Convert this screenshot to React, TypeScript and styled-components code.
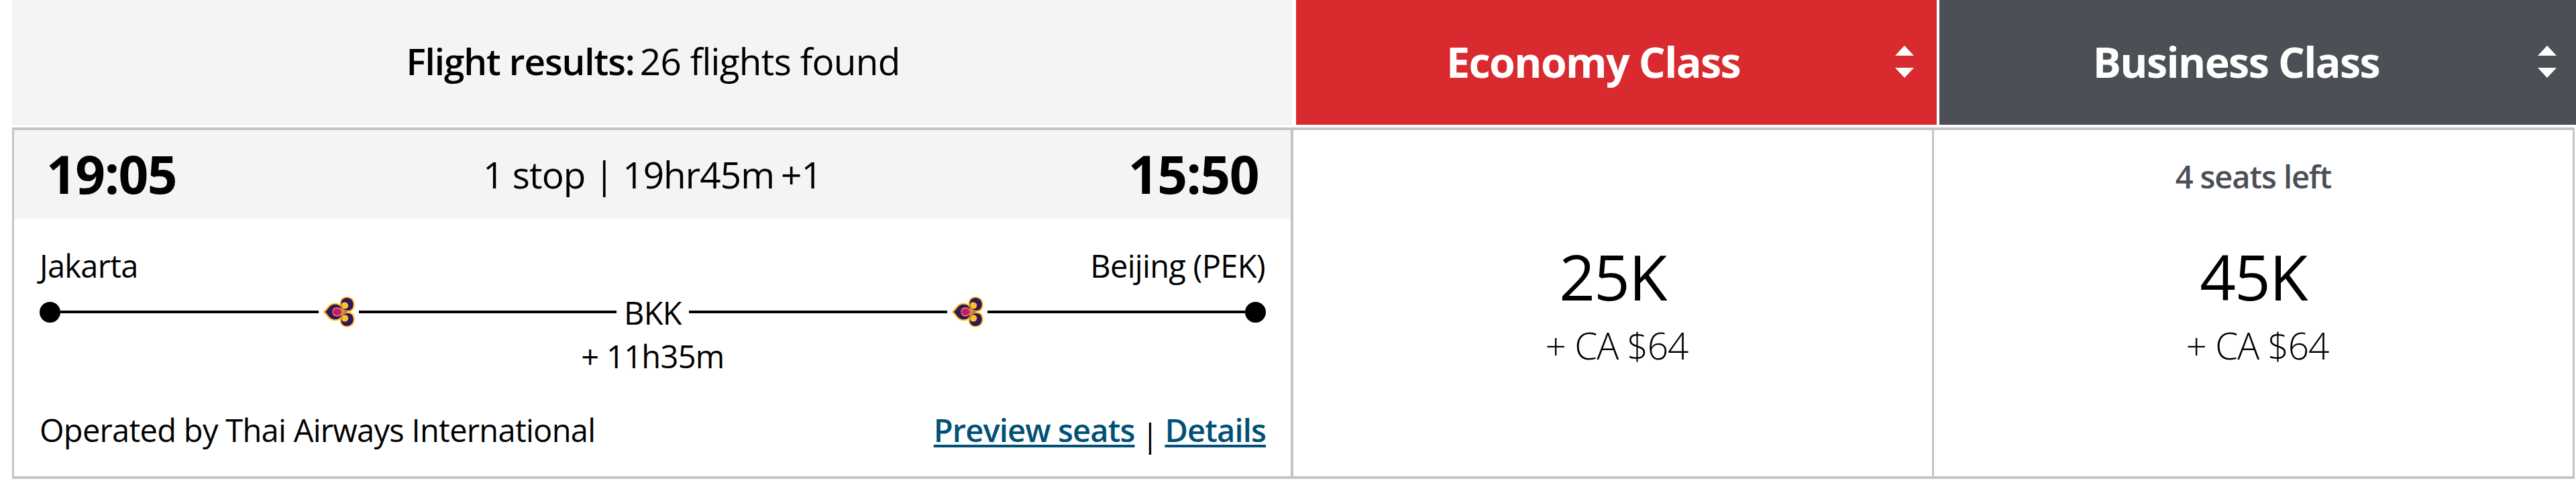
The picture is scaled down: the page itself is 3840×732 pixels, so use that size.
import styled, { createGlobalStyle } from "styled-components";

const colors = {
  economy: "#d92a2f",
  business: "#4b4f56",
  grey: "#f4f4f4",
  border: "#c1c5c9",
  link: "#005078",
  text: "#000000",
};

const GlobalStyle = createGlobalStyle`
  * {
    box-sizing: border-box;
  }

  body {
    margin: 0;
    background: #ffffff;
    color: ${colors.text};
    font-family: "Open Sans", "Noto Sans", sans-serif;
    letter-spacing: -0.7px;
    overflow: hidden;
  }
`;

const Page = styled.main`
  width: 3840px;
  height: 732px;
  padding-left: 18px;
  overflow: hidden;
`;

const HeaderRow = styled.header`
  display: grid;
  grid-template-columns: 1910px 955px 949px;
  column-gap: 4px;
  height: 190px;
  padding-bottom: 4px;
`;

const Summary = styled.div`
  display: flex;
  align-items: center;
  justify-content: center;
  margin-right: 2px;
  padding: 0 0 2px 3px;
  background: ${colors.grey};
  border-bottom: 2px solid #eeeeee;
  font-size: 54.9px;
  line-height: 76px;
`;

const SummaryLabel = styled.strong`
  font-weight: 630;
  letter-spacing: -1.1px;
  margin-right: 8px;
`;

const CabinHeader = styled.div<{ $color: string; $end: number }>`
  display: flex;
  align-items: center;
  gap: 3px;
  padding: 0 ${(props) => props.$end}px 2px 0;
  background: ${(props) => props.$color};
  color: #ffffff;
`;

const CabinTitle = styled.h2`
  flex: 1;
  margin: 0;
  padding-right: 4px;
  font-size: 62.7px;
  font-weight: 660;
  letter-spacing: -1.6px;
  line-height: 86px;
  text-align: center;
`;

const SortIcon = styled.svg`
  width: 28px;
  height: 48px;
  fill: #ffffff;
`;

const Card = styled.section`
  display: grid;
  grid-template-columns: 1907px 955px 955px;
  width: 3820px;
  height: 524px;
  border: solid ${colors.border};
  border-width: 4px 0 4px 3px;
`;

const Flight = styled.article`
  border-right: 4px solid ${colors.border};
`;

const Times = styled.div`
  display: flex;
  align-items: center;
  justify-content: space-between;
  height: 132px;
  padding: 0 48px;
  background: ${colors.grey};
`;

const Time = styled.span`
  padding-bottom: 3px;
  font-size: 78.4px;
  font-weight: 670;
  letter-spacing: -1.5px;
  line-height: 100px;
`;

const Duration = styled.span`
  display: flex;
  gap: 10px;
  font-size: 54.9px;
  letter-spacing: -0.95px;
  line-height: 76px;
`;

const Body = styled.div`
  padding: 38px 37px 0 38px;
  font-size: 47px;
`;

const Cities = styled.div`
  display: flex;
  justify-content: space-between;
  padding-right: 1px;
  line-height: 64px;
`;

const Track = styled.div`
  display: flex;
  align-items: center;
  height: 74px;
`;

const Dot = styled.span`
  width: 31px;
  height: 31px;
  border-radius: 50%;
  background: ${colors.text};
`;

const Line = styled.span`
  flex: 1;
  height: 4px;
  background: ${colors.text};
`;

const Carrier = styled.span`
  display: flex;
  justify-content: center;
  width: 60px;
`;

const Stop = styled.span`
  width: 108px;
  padding-top: 2px;
  line-height: 64px;
  text-align: center;
`;

const Layover = styled.div`
  line-height: 58px;
  text-align: center;
`;

const Footer = styled.footer`
  display: flex;
  justify-content: space-between;
  margin-top: 49px;
  line-height: 64px;
`;

const Links = styled.nav`
  display: flex;
`;

const Link = styled.a`
  color: ${colors.link};
  font-weight: 600;
  letter-spacing: -0.85px;
  text-decoration: underline;
  text-decoration-thickness: 4px;
  text-underline-offset: 4px;
`;

const Divider = styled.span`
  width: 45px;
  padding-top: 8px;
  text-align: center;
`;

const Fare = styled.div`
  display: flex;
  flex-direction: column;
  align-items: center;
  border-right: 3px solid ${colors.border};
`;

const SeatsLeft = styled.span`
  height: 64px;
  margin-top: 37px;
  color: ${colors.business};
  font-size: 47px;
  font-weight: 650;
  letter-spacing: -1.1px;
  line-height: 64px;
`;

const Points = styled.span`
  margin-top: 53px;
  font-size: 94px;
  letter-spacing: -1.8px;
  line-height: 128px;
`;

const Taxes = styled.span`
  padding-left: 12px;
  font-size: 54.9px;
  font-weight: 300;
  letter-spacing: -1px;
  line-height: 78px;
`;

const fares = [
  { points: "25K", taxes: "+ CA $64", seats: "" },
  { points: "45K", taxes: "+ CA $64", seats: "4 seats left" },
];

function SortArrows() {
  return (
    <SortIcon viewBox="0 0 28 48">
      <path d="M14 0 28 15H0zM0 33h28L14 48z" />
    </SortIcon>
  );
}

function ThaiLogo() {
  return (
    <svg width="48" height="46" viewBox="65 35 144 138">
      <g fill="#ffc02e">
        <path d="M66 104C84 92 88 64 121 64C140 64 151 76 158 90V118C151 132 140 144 121 144C88 144 84 116 66 104Z" />
        <path d="M142 66C142 48 155 36 173 36C195 36 208 51 208 71C208 92 197 104 180 104C197 104 208 116 208 137C208 157 195 172 173 172C155 172 142 160 142 142L152 104Z" />
      </g>
      <g fill="#321757">
        <path d="M75 104C90 95 94 70 121 70C137 70 146 79 151 91C156 98 163 100 172 101V107C163 108 156 110 151 117C146 129 137 138 121 138C94 138 90 113 75 104Z" />
        <path d="M147 66C148 50 159 41 173 41C191 41 202 54 202 71C202 88 192 98 177 98C168 98 160 95 155 90C151 84 147 76 147 66Z" />
        <path d="M147 142C148 158 159 167 173 167C191 167 202 154 202 137C202 120 192 110 177 110C168 110 160 113 155 118C151 124 147 132 147 142Z" />
      </g>
      <g fill="#ffc02e">
        <path d="M149 70C153 60 164 58 172 63C181 68 182 80 175 87C169 92 160 91 155 88Z" />
        <path d="M149 138C153 148 164 150 172 145C181 140 182 128 175 121C169 116 160 117 155 120Z" />
      </g>
      <path
        d="M174 104C153 101 148 84 128 84C115 84 108 93 108 104C108 115 115 124 128 124C148 124 153 107 174 104Z"
        fill="#f28a3c"
      />
      <path
        d="M151 104L140 91C128 85 111 91 111 104C111 117 128 123 140 117Z"
        fill="#c0197d"
      />
    </svg>
  );
}

export default function App(): JSX.Element {
  return (
    <Page>
      <GlobalStyle />
      <HeaderRow>
        <Summary>
          <SummaryLabel>Flight results:</SummaryLabel>
          <span>26 flights found</span>
        </Summary>
        <CabinHeader $color={colors.economy} $end={34}>
          <CabinTitle>Economy Class</CabinTitle>
          <SortArrows />
        </CabinHeader>
        <CabinHeader $color={colors.business} $end={29}>
          <CabinTitle>Business Class</CabinTitle>
          <SortArrows />
        </CabinHeader>
      </HeaderRow>
      <Card>
        <Flight>
          <Times>
            <Time>19:05</Time>
            <Duration>
              <span>1 stop | 19hr45m</span>
              <span>+1</span>
            </Duration>
            <Time>15:50</Time>
          </Times>
          <Body>
            <Cities>
              <span>Jakarta</span>
              <span>Beijing (PEK)</span>
            </Cities>
            <Track>
              <Dot />
              <Line />
              <Carrier>
                <ThaiLogo />
              </Carrier>
              <Line />
              <Stop>BKK</Stop>
              <Line />
              <Carrier>
                <ThaiLogo />
              </Carrier>
              <Line />
              <Dot />
            </Track>
            <Layover>+ 11h35m</Layover>
            <Footer>
              <span>Operated by Thai Airways International</span>
              <Links>
                <Link>Preview seats</Link>
                <Divider>|</Divider>
                <Link>Details</Link>
              </Links>
            </Footer>
          </Body>
        </Flight>
        {fares.map((fare) => (
          <Fare key={fare.points}>
            <SeatsLeft>{fare.seats}</SeatsLeft>
            <Points>{fare.points}</Points>
            <Taxes>{fare.taxes}</Taxes>
          </Fare>
        ))}
      </Card>
    </Page>
  );
}
